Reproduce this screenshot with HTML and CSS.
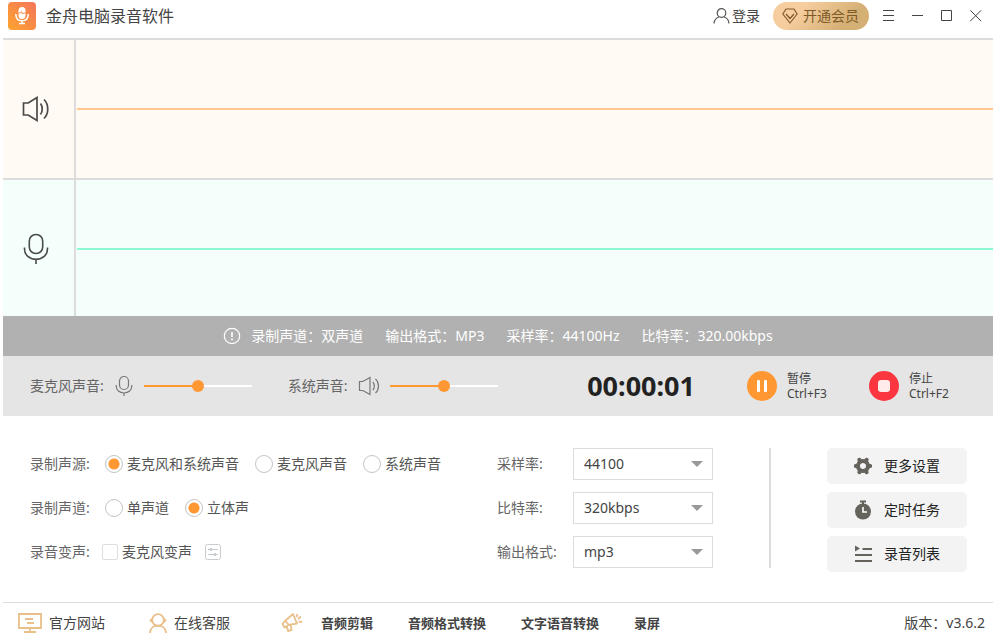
FILE: index.html
```html
<!DOCTYPE html>
<html lang="zh-CN">
<head>
<meta charset="utf-8">
<meta name="viewport" content="width=device-width, initial-scale=1">
<title>金舟电脑录音软件</title>
<link rel="stylesheet" href="styles.css">
</head>
<body>
<div class="app">
  <header class="titlebar">
    <svg class="logo" viewBox="0 0 28 28" width="28" height="28" aria-hidden="true">
      <defs><linearGradient id="logoFill" x1="0" y1="1" x2="1" y2="0"><stop offset="0" stop-color="#fda52f"/><stop offset="1" stop-color="#f4745b"/></linearGradient></defs>
      <rect width="28" height="28" rx="4" fill="url(#logoFill)"/>
      <rect x="10.500" y="5" width="7" height="12" rx="3.500" fill="#fff"/>
      <path d="M10.500 11h2l1-1.500 1.200 2.500 1-1h2" fill="none" stroke="#f98a4b" stroke-width="1"/>
      <path d="M7.800 12c0 4.500 2.700 6.800 6.200 6.800s6.200-2.300 6.200-6.800M14 19v2M11 21.500h6" fill="none" stroke="#fff" stroke-width="1.500"/>
    </svg>
    <h1 class="title">金舟电脑录音软件</h1>
    <button class="login" type="button">
      <svg width="17" height="16" viewBox="0 0 17 16" aria-hidden="true"><g fill="none" stroke="#555" stroke-width="1.200"><circle cx="8.500" cy="5" r="4.300"/><path d="M1 15.500c.3-3.500 2.200-5.800 5-6.500M16 15.500c-.3-3.500-2.200-5.800-5-6.500"/></g></svg>
      <span>登录</span>
    </button>
    <button class="vip" type="button">
      <svg width="16" height="16" viewBox="0 0 16 16" aria-hidden="true"><path d="M4 1h8l3.200 5L8 15 .8 6zM4 6l4 4.500L12 6" fill="none" stroke="#7d5a28" stroke-width="1.200" stroke-linejoin="round"/></svg>
      <span>开通会员</span>
    </button>
    <div class="window-buttons">
      <button type="button" aria-label="菜单"><svg width="12" height="12" viewBox="0 0 12 12"><path d="M0 .5h11M0 5.500h11M0 10.500h11"/></svg></button>
      <button type="button" aria-label="最小化"><svg width="12" height="12" viewBox="0 0 12 12"><path d="M0 5.500h11"/></svg></button>
      <button type="button" aria-label="最大化"><svg width="12" height="12" viewBox="0 0 12 12"><path d="M.5.500h10v10H.5z"/></svg></button>
      <button type="button" aria-label="关闭"><svg width="12" height="12" viewBox="0 0 12 12"><path d="M.3.300l10.800 10.800M11.100.300L.3 11.100"/></svg></button>
    </div>
  </header>

  <main class="content">
    <section class="track track-system" aria-label="系统声音波形">
      <div class="track-icon">
        <svg width="28" height="26" viewBox="0 0 28 26" aria-hidden="true"><g fill="none" stroke="#4a4a4a" stroke-width="1.700"><path d="M1.500 7h4.700L15 1.500v23L6.200 19H1.500z"/><path d="M18.500 7.500c2.300 3 2.300 8 0 11M22 3.500c5 5 5 14 0 19"/></g></svg>
      </div>
      <div class="wave"><div class="wave-line"></div></div>
    </section>
    <section class="track track-mic" aria-label="麦克风波形">
      <div class="track-icon">
        <svg width="26" height="32" viewBox="0 0 26 32" aria-hidden="true"><g fill="none" stroke="#4a4a4a" stroke-width="1.600"><rect x="6.300" y="1.500" width="13.400" height="19" rx="6.500"/><path d="M1.500 14.500v1.500c0 6 5 10.300 11.500 10.300S24.500 22 24.500 16v-1.500M13 26v5"/></g></svg>
      </div>
      <div class="wave"><div class="wave-line"></div></div>
    </section>

    <div class="info">
      <div class="info-item">
        <svg width="18" height="18" viewBox="0 0 18 18" aria-hidden="true"><circle cx="9" cy="9" r="7.700" fill="none" stroke="#fff" stroke-width="1.200"/><path d="M9 5v5M9 11.500v1.700" stroke="#fff" stroke-width="1.600"/></svg>
        <span>录制声道：双声道</span>
      </div>
      <span>输出格式：MP3</span>
      <span>采样率：44100Hz</span>
      <span>比特率：320.00kbps</span>
    </div>

    <section class="controls">
      <div class="volume">
        <label class="label" for="mic-volume">麦克风声音:</label>
        <svg width="20" height="22" viewBox="0 0 20 22" aria-hidden="true"><g fill="none" stroke="#777" stroke-width="1.200"><rect x="5.500" y="1.500" width="9" height="13" rx="4.500"/><path d="M2.200 10v1c0 4.200 3.400 7 7.800 7s7.800-2.800 7.800-7v-1M10 18v3"/></g></svg>
        <input id="mic-volume" class="slider" type="range" min="0" max="100" value="50">
      </div>
      <div class="volume">
        <label class="label" for="system-volume">系统声音:</label>
        <svg width="22" height="20" viewBox="0 0 22 20" aria-hidden="true"><g fill="none" stroke="#777" stroke-width="1.200"><path d="M1.500 5.500h3.300L12 1.500v17L4.800 14.500H1.500z"/><path d="M14.800 5.800c2 2.200 2 6.200 0 8.400M17.500 2.800c4 4 4 10.400 0 14.400"/></g></svg>
        <input id="system-volume" class="slider" type="range" min="0" max="100" value="50">
      </div>
      <time class="timer">00:00:01</time>
      <button class="action" type="button">
        <svg width="30" height="30" viewBox="0 0 30 30" aria-hidden="true"><circle cx="15" cy="15" r="15" fill="#ff9833"/><rect x="10" y="9" width="3" height="12" rx="1" fill="#fff"/><rect x="17" y="9" width="3" height="12" rx="1" fill="#fff"/></svg>
        <span class="action-text"><span>暂停</span><span>Ctrl+F3</span></span>
      </button>
      <button class="action" type="button">
        <svg width="30" height="30" viewBox="0 0 30 30" aria-hidden="true"><circle cx="15" cy="15" r="15" fill="#fb3640"/><rect x="9" y="9" width="12" height="12" rx="3" fill="#ffebe9"/></svg>
        <span class="action-text"><span>停止</span><span>Ctrl+F2</span></span>
      </button>
    </section>

    <form class="settings">
      <div class="options">
        <div class="option-row" role="radiogroup" aria-labelledby="source-label">
          <span class="label option-label" id="source-label">录制声源:</span>
          <label class="choice"><input type="radio" name="source" checked>麦克风和系统声音</label>
          <label class="choice"><input type="radio" name="source">麦克风声音</label>
          <label class="choice"><input type="radio" name="source">系统声音</label>
        </div>
        <div class="option-row" role="radiogroup" aria-labelledby="channel-label">
          <span class="label option-label" id="channel-label">录制声道:</span>
          <label class="choice"><input type="radio" name="channel">单声道</label>
          <label class="choice"><input type="radio" name="channel" checked>立体声</label>
        </div>
        <div class="option-row option-row-voice">
          <span class="label option-label">录音变声:</span>
          <label class="choice"><input type="checkbox" name="voice">麦克风变声</label>
          <button class="adjust" type="button" aria-label="变声设置"><svg width="16" height="16" viewBox="0 0 16 16"><g fill="none" stroke="#c8cccf"><rect x=".5" y=".5" width="15" height="15" rx="2"/><path d="M3 5.500h10M3 10.500h10"/></g><path d="M5 4h2v3H5zM9 9h2v3H9z" fill="#c8cccf"/></svg></button>
        </div>
      </div>

      <div class="formats">
        <label class="label" for="rate">采样率:</label>
        <div class="select"><select id="rate"><option>44100</option></select></div>
        <label class="label" for="bitrate">比特率:</label>
        <div class="select"><select id="bitrate"><option>320kbps</option></select></div>
        <label class="label" for="format">输出格式:</label>
        <div class="select"><select id="format"><option>mp3</option></select></div>
      </div>

      <div class="divider"></div>

      <div class="tools">
        <button class="tool" type="button">
          <svg width="18" height="18" viewBox="0 0 18 18" aria-hidden="true"><g fill="none" stroke="#66625c"><circle cx="9" cy="9" r="5" stroke-width="4"/><path d="M1.800 9h2M14.200 9h2M5.400 2.800l1 1.700M11.600 13.500l1 1.700M12.600 2.800l-1 1.700M6.400 13.500l-1 1.700" stroke-width="4" stroke-linecap="round"/></g></svg>
          <span>更多设置</span>
        </button>
        <button class="tool" type="button">
          <svg width="18" height="20" viewBox="0 0 18 20" aria-hidden="true"><path d="M6 .5h6v2H10v2H8v-2H6z" fill="#66625c"/><circle cx="9" cy="11.500" r="8" fill="#66625c"/><path d="M9 7v5h4" fill="none" stroke="#fff" stroke-width="1.600"/></svg>
          <span>定时任务</span>
        </button>
        <button class="tool" type="button">
          <svg width="18" height="18" viewBox="0 0 18 18" aria-hidden="true"><path d="M1 .5l5 3-5 3z" fill="#66625c"/><path d="M8.500 4H18M1 10h17M1 16h17" stroke="#66625c" stroke-width="2"/></svg>
          <span>录音列表</span>
        </button>
      </div>
    </form>
  </main>

  <footer class="footer">
    <a class="footer-link" href="#site">
      <svg width="24" height="20" viewBox="0 0 24 20" aria-hidden="true"><path d="M1 1h22v14H1zM12 15v4M6 19h12M7 6h8M9 10h7" fill="none" stroke="#e9bf8a" stroke-width="1.800"/></svg>
      <span>官方网站</span>
    </a>
    <a class="footer-link service" href="#service">
      <svg width="18" height="20" viewBox="0 0 18 20" aria-hidden="true"><g fill="none" stroke="#e9bf8a" stroke-width="1.800"><circle cx="9" cy="7" r="5.800"/><path d="M1 20c.2-4.500 3.300-7.300 8-7.300s7.800 2.800 8 7.300"/></g><path d="M3.500 4v6L.2 7.800zM14.500 4v6l3.300-2.200z" fill="#e9bf8a"/></svg>
      <span>在线客服</span>
    </a>
    <nav class="promo" aria-label="更多工具">
      <svg width="22" height="20" viewBox="0 0 22 20" aria-hidden="true"><g fill="none" stroke="#e9bf8a" stroke-width="1.800" stroke-linejoin="round"><path d="M12 1l4 9.500-8 1.300-4.500 2.700L1.500 11 4 8zM4.500 8l3.500 4M6 14l1 4 3.500-.8-.8-5M15.500 4l1-3M17 6l3-2.500M17.500 8.500l3.500.5"/></g></svg>
      <a href="#audio-edit">音频剪辑</a>
      <a href="#audio-convert">音频格式转换</a>
      <a href="#speech">文字语音转换</a>
      <a href="#screen">录屏</a>
    </nav>
    <span class="version">版本：v3.6.2</span>
  </footer>
</div>
</body>
</html>
```
FILE: styles.css
```css
* { box-sizing: border-box; }

body {
  margin: 0;
  background: #fff;
  color: #444;
  font: 14px/20px "Noto Sans", "Noto Sans CJK SC", sans-serif;
}

button, input, select { font: inherit; color: inherit; margin: 0; }
button { border: 0; padding: 0; background: none; cursor: pointer; }
svg { display: block; flex: none; }
a { color: inherit; text-decoration: none; }

.app {
  display: flex;
  flex-direction: column;
  min-height: 100vh;
  margin: 0 13px 0 3px;
}

.titlebar {
  display: flex;
  align-items: center;
  height: 40px;
  padding: 0 11px 6px 5px;
  border-bottom: 2px solid #dcdcdc;
}
.title {
  margin: 0 auto 0 10px;
  font-size: 16px;
  font-weight: 400;
}
.login { display: flex; align-items: center; gap: 2px; margin-right: 13px; }
.vip {
  display: flex;
  align-items: center;
  gap: 5px;
  height: 28px;
  padding: 0 10px 0 9px;
  border-radius: 14px;
  background: linear-gradient(135deg, #f5cd9e 30%, #d5b075 75%);
  color: #7d5a28;
}
.window-buttons { display: flex; gap: 17px; margin-left: 14px; }
.window-buttons svg { fill: none; stroke: #444; stroke-width: 1; }

.content { display: flex; flex: 1; flex-direction: column; }

.track { display: flex; flex: 1 1 136px; }
.track-system { background: #fffaf3; border-bottom: 2px solid #dcdcdc; color: #ffc78c; flex-basis: 140px; }
.track-mic { background: #f4fffc; color: #8df7d3; }
.track-icon {
  display: flex;
  align-items: center;
  justify-content: center;
  width: 73px;
  padding-right: 5px;
  border-right: 2px solid #dcdcdc;
}
.wave { display: flex; flex: 1; align-items: center; padding-left: 1px; }
.track-mic .track-icon, .track-mic .wave { padding-top: 2px; }
.wave-line { flex: 1; height: 2px; background: currentColor; }

.info {
  display: flex;
  align-items: center;
  justify-content: center;
  gap: 22px;
  height: 40px;
  background: #b1b1b1;
  color: #fff;
}
.info-item { display: flex; align-items: center; gap: 10px; }

.controls {
  display: flex;
  align-items: center;
  gap: 36px;
  height: 60px;
  padding: 0 42px 0 27px;
  background: #e5e5e5;
}
.volume { display: flex; align-items: center; gap: 10px; }
.label { color: #666; }

.slider {
  width: 108px;
  height: 12px;
  appearance: none;
  background: linear-gradient(90deg, #ff9833 50%, #fff 50%) center / 100% 2px no-repeat;
}
.slider::-webkit-slider-thumb {
  appearance: none;
  width: 12px;
  height: 12px;
  border-radius: 50%;
  background: #ff9833;
}

.timer {
  margin: 0 16px 0 auto;
  color: #222;
  font-size: 27px;
  font-weight: 700;
  line-height: 32px;
}
.action { display: flex; align-items: center; gap: 10px; text-align: left; }
.action + .action { margin-left: 4px; }
.action-text { display: flex; flex-direction: column; min-width: 42px; font-size: 12px; line-height: 15px; }

.settings { display: flex; gap: 56px; padding: 32px 26px 30px 27px; }
.options { display: flex; flex: 1; flex-direction: column; gap: 12px; }
.option-row { display: flex; align-items: center; gap: 16px; height: 32px; }
.option-row-voice { gap: 13px; }
.option-label { width: 59px; white-space: nowrap; }
.choice { display: flex; align-items: center; gap: 4px; color: #555; white-space: nowrap; }
.choice input { appearance: none; background: #fff; border: 1px solid #c4c4c4; }
.choice input[type="radio"] { width: 18px; height: 18px; border-radius: 50%; }
.choice input[type="radio"]:checked { background: radial-gradient(circle, #ff9833 5px, #fff 6px); }
.choice input[type="checkbox"] { width: 16px; height: 16px; border-color: #dedede; border-radius: 2px; }

.formats {
  display: grid;
  grid-template-columns: 76px 140px;
  grid-auto-rows: 32px;
  row-gap: 12px;
  align-items: center;
}
.select { position: relative; }
.select select {
  width: 100%;
  height: 32px;
  padding: 0 10px;
  appearance: none;
  border: 1px solid #dcdcdc;
  border-radius: 0;
  background: #fff;
}
.select::after {
  content: "";
  position: absolute;
  top: 13px;
  right: 10px;
  border: 6px solid transparent;
  border-top-color: #999;
  border-bottom: 0;
  pointer-events: none;
}

.divider { width: 2px; height: 120px; background: #dcdcdc; }

.tools { display: flex; flex-direction: column; gap: 8px; }
.tool {
  display: flex;
  align-items: center;
  justify-content: center;
  gap: 12px;
  width: 140px;
  height: 36px;
  border-radius: 5px;
  background: #f3f3f3;
  color: #222;
}

.footer {
  display: flex;
  align-items: center;
  height: 34px;
  padding: 7px 8px 0 15px;
  border-top: 1px solid #dcdcdc;
}
.footer-link { display: flex; align-items: center; gap: 7px; }
.service { margin-left: 44px; }
.promo { display: flex; align-items: center; gap: 35px; margin-left: 51px; font-size: 13px; font-weight: 700; }
.promo svg { margin-right: -17px; }
.version { margin-left: auto; }
```
